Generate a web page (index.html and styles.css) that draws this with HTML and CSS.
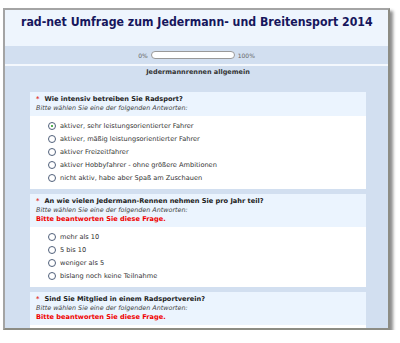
FILE: index.html
```html
<!DOCTYPE html>
<html lang="de">
<head>
    <meta charset="UTF-8">
    <title>rad-net Umfrage</title>
    <link rel="stylesheet" href="styles.css">
</head>
<body>
    <div class="frame">
        <div class="survey-header">
            <h1>rad-net Umfrage zum Jedermann- und Breitensport 2014</h1>
        </div>

        <div class="progress-row">
            <span>0%</span>
            <div class="progress-bar"></div>
            <span>100%</span>
        </div>

        <div class="survey-body">
            <div class="group-title">Jedermannrennen allgemein</div>

            <div class="question">
                <div class="question-head">
                    <div class="question-text"><span class="star">*</span>Wie intensiv betreiben Sie Radsport?</div>
                    <div class="help">Bitte wählen Sie eine der folgenden Antworten:</div>
                </div>
                <div class="answers">
                    <label class="answer"><span class="radio checked"></span>aktiver, sehr leistungsorientierter Fahrer</label>
                    <label class="answer"><span class="radio"></span>aktiver, mäßig leistungsorientierter Fahrer</label>
                    <label class="answer"><span class="radio"></span>aktiver Freizeitfahrer</label>
                    <label class="answer"><span class="radio"></span>aktiver Hobbyfahrer - ohne größere Ambitionen</label>
                    <label class="answer"><span class="radio"></span>nicht aktiv, habe aber Spaß am Zuschauen</label>
                </div>
            </div>

            <div class="question">
                <div class="question-head">
                    <div class="question-text"><span class="star">*</span>An wie vielen Jedermann-Rennen nehmen Sie pro Jahr teil?</div>
                    <div class="help">Bitte wählen Sie eine der folgenden Antworten:</div>
                    <div class="error">Bitte beantworten Sie diese Frage.</div>
                </div>
                <div class="answers">
                    <label class="answer"><span class="radio"></span>mehr als 10</label>
                    <label class="answer"><span class="radio"></span>5 bis 10</label>
                    <label class="answer"><span class="radio"></span>weniger als 5</label>
                    <label class="answer"><span class="radio"></span>bislang noch keine Teilnahme</label>
                </div>
            </div>

            <div class="question">
                <div class="question-head">
                    <div class="question-text"><span class="star">*</span>Sind Sie Mitglied in einem Radsportverein?</div>
                    <div class="help">Bitte wählen Sie eine der folgenden Antworten:</div>
                    <div class="error">Bitte beantworten Sie diese Frage.</div>
                </div>
                <div class="answers">
                    <label class="answer"><span class="radio"></span></label>
                </div>
            </div>
        </div>
    </div>
</body>
</html>
```

FILE: styles.css
```css
body {
    margin: 0;
    padding: 0;
    background-color: #ffffff;
    font-family: "DejaVu Sans", Verdana, sans-serif;
    color: #333;
}

.frame {
    margin: 8px 0 0 3px;
    width: 383px;
    height: 318px;
    overflow: hidden;
    border: 2px solid #a4a4a4;
    border-right-color: #8c8c84;
    border-bottom-color: #8c8c84;
    background-color: #d2dff0;
    box-shadow: 3px 3px 3px rgba(0, 0, 0, 0.45);
}

.survey-header {
    background-color: #eef5fd;
    height: 36px;
    display: flex;
    align-items: flex-start;
    justify-content: center;
}

.survey-header h1 {
    margin: 4px 0 0;
    font-size: 12.5px;
    font-weight: bold;
    color: #16165c;
    white-space: nowrap;
    transform: scaleX(0.88);
}

.progress-row {
    height: 18px;
    display: flex;
    align-items: center;
    justify-content: center;
    gap: 3px;
    font-size: 6px;
    color: #666;
    border-bottom: 2px solid #f4f8fd;
}

.progress-bar {
    width: 82px;
    height: 6px;
    background-color: #fff;
    border: 1px solid #999;
    border-radius: 4px;
}

.survey-body {
    padding: 0 22px 0 25px;
}

.group-title {
    text-align: center;
    font-size: 6.5px;
    font-weight: bold;
    color: #333;
    padding-top: 2px;
    height: 24px;
}

.question {
    margin-bottom: 5px;
}

.question-head {
    background-color: #ebf4fe;
    padding: 3px 6px;
}

.question-text {
    font-size: 6.6px;
    font-weight: bold;
    color: #222;
    line-height: 9px;
}

.star {
    color: #e03030;
    margin-right: 5px;
}

.help {
    font-size: 6.4px;
    font-style: italic;
    color: #444;
    line-height: 9px;
}

.error {
    font-size: 6.6px;
    font-weight: bold;
    color: #f00000;
    line-height: 9px;
}

.answers {
    background-color: #fff;
    padding: 3px 0 5px 18px;
}

.answer {
    display: flex;
    align-items: center;
    gap: 4px;
    height: 13px;
    font-size: 6.6px;
    color: #333;
}

.radio {
    width: 6px;
    height: 6px;
    border: 1px solid #50607a;
    border-radius: 50%;
    background-color: #fff;
    position: relative;
}

.radio.checked::after {
    content: "";
    position: absolute;
    left: 2px;
    top: 2px;
    width: 2px;
    height: 2px;
    border-radius: 50%;
    background-color: #1c9a1c;
}
```
